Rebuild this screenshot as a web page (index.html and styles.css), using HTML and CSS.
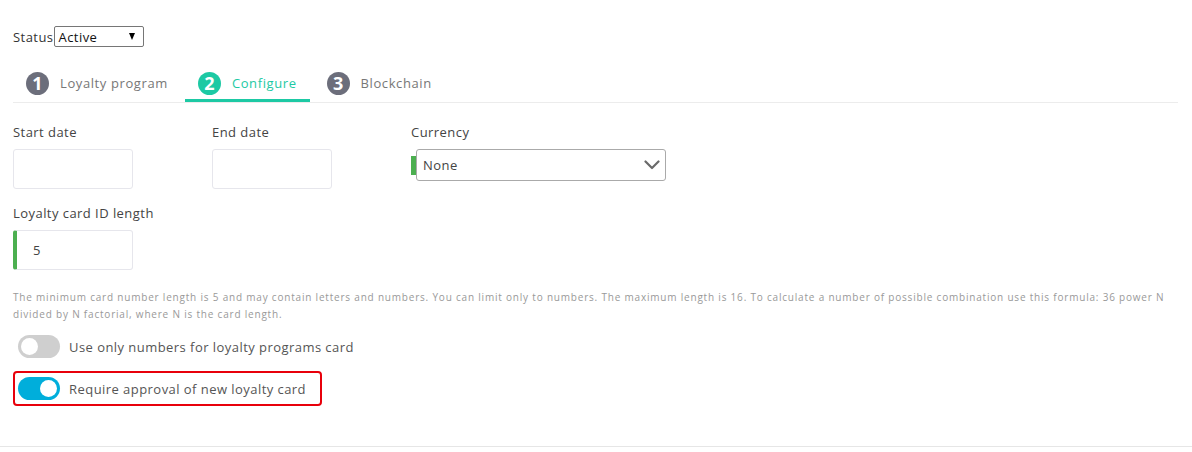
FILE: index.html
```html
<!DOCTYPE html>
<html lang="en">
<head>
<meta charset="utf-8">
<title>Loyalty program configuration</title>
<link rel="stylesheet" href="styles.css">
</head>
<body>
<div class="page">
  <div class="status-row">
    <span class="status-label">Status</span>
    <div class="native-select">
      <span>Active</span>
      <span class="native-arrow"></span>
    </div>
  </div>

  <ul class="tabs">
    <li class="tab"><span class="tab-num">1</span><span class="tab-text">Loyalty program</span></li>
    <li class="tab active"><span class="tab-num">2</span><span class="tab-text">Configure</span></li>
    <li class="tab"><span class="tab-num">3</span><span class="tab-text">Blockchain</span></li>
  </ul>

  <div class="form-row">
    <div class="field">
      <label class="field-label">Start date</label>
      <div class="text-input"></div>
    </div>
    <div class="field">
      <label class="field-label">End date</label>
      <div class="text-input"></div>
    </div>
    <div class="field">
      <label class="field-label">Currency</label>
      <div class="select-wrap">
        <span class="valid-mark"></span>
        <div class="select-box">
          <span>None</span>
          <svg class="chevron" width="16" height="10" viewBox="0 0 16 10"><path d="M1.5 1.5 L8 8 L14.5 1.5" fill="none" stroke="#6a6a6a" stroke-width="2.2" stroke-linecap="round" stroke-linejoin="round"/></svg>
        </div>
      </div>
    </div>
  </div>

  <div class="field single">
    <label class="field-label">Loyalty card ID length</label>
    <div class="text-input valid"><span>5</span></div>
  </div>

  <p class="help">The minimum card number length is 5 and may contain letters and numbers. You can limit only to numbers. The maximum length is 16. To calculate a number of possible combination use this formula: 36 power N divided by N factorial, where N is the card length.</p>

  <div class="switch-row">
    <span class="switch"><span class="knob"></span></span>
    <span class="switch-text">Use only numbers for loyalty programs card</span>
  </div>
  <div class="switch-row highlighted">
    <span class="switch on"><span class="knob"></span></span>
    <span class="switch-text">Require approval of new loyalty card</span>
  </div>
</div>
<div class="footer-line"></div>
</body>
</html>
```

FILE: styles.css
```css
html, body {
  margin: 0;
  padding: 0;
  background: #fff;
}
body {
  font-family: "Open Sans", "Liberation Sans", sans-serif;
  font-size: 13px;
  letter-spacing: 0.45px;
  color: #4a4a4a;
}
.page {
  padding: 26px 14px 0 13px;
}
.status-row {
  display: flex;
  align-items: center;
  height: 21px;
}
.status-label {
  color: #333;
  font-size: 13px;
}
.native-select {
  box-sizing: border-box;
  width: 90px;
  height: 21px;
  border: 1px solid #767676;
  border-radius: 2px;
  display: flex;
  align-items: center;
  justify-content: space-between;
  padding: 0 8px 0 4px;
  color: #111;
  font-size: 13px;
}
.native-arrow {
  width: 0;
  height: 0;
  border-left: 3.5px solid transparent;
  border-right: 3.5px solid transparent;
  border-top: 7px solid #000;
}
.tabs {
  list-style: none;
  margin: 17px 0 0 0;
  padding: 0;
  display: flex;
  gap: 4px;
  border-bottom: 1px solid #ececec;
}
.tab {
  display: flex;
  align-items: center;
  gap: 11px;
  padding: 8px 13px 4px 13px;
  border-bottom: 3px solid transparent;
  color: #777;
  line-height: 23px;
  letter-spacing: 0.6px;
}
.tab.active {
  border-bottom-color: #1dc9a4;
  color: #1dc9a4;
}
.tab-num {
  width: 23px;
  height: 23px;
  border-radius: 50%;
  background: #6c6e7b;
  color: #fff;
  font-weight: 700;
  font-size: 18px;
  letter-spacing: 0;
  line-height: 23px;
  text-align: center;
}
.tab.active .tab-num {
  background: #1dc9a4;
}
.form-row {
  display: flex;
  margin-top: 19px;
}
.field {
  width: 199px;
  display: flex;
  flex-direction: column;
}
.field-label {
  line-height: 20px;
  color: #444;
  margin-bottom: 7px;
}
.text-input {
  box-sizing: border-box;
  width: 120px;
  height: 40px;
  border: 1px solid #e6e6ec;
  border-radius: 3px;
  display: flex;
  align-items: center;
}
.text-input.valid {
  border-left: 4px solid #4caf50;
  padding-left: 16px;
  color: #444;
}
.single {
  margin-top: 14px;
}
.select-wrap {
  display: flex;
  align-items: center;
  width: 260px;
}
.valid-mark {
  width: 5px;
  height: 19px;
  background: #4caf50;
}
.select-box {
  box-sizing: border-box;
  width: 250px;
  height: 32px;
  border: 1px solid #aaa;
  border-radius: 3px;
  display: flex;
  align-items: center;
  justify-content: space-between;
  padding: 0 5px 0 6px;
  color: #444;
}
.help {
  margin: 19px 0 0 0;
  font-size: 10px;
  letter-spacing: 0.8px;
  line-height: 17px;
  color: #999;
}
.switch-row {
  display: flex;
  align-items: center;
  gap: 9px;
  box-sizing: border-box;
  width: fit-content;
  padding: 4px 14px 4px 3px;
  border: 2px solid transparent;
  border-radius: 4px;
  margin-top: 6px;
  color: #555;
}
.switch-row + .switch-row {
  margin-top: 7px;
}
.switch-row.highlighted {
  border-color: #e8000b;
}
.switch {
  position: relative;
  width: 42px;
  height: 23px;
  border-radius: 12px;
  background: #cfcfcf;
  flex: none;
}
.switch .knob {
  position: absolute;
  top: 3px;
  left: 3px;
  width: 17px;
  height: 17px;
  border-radius: 50%;
  background: #fff;
}
.switch.on {
  background: #00aedb;
}
.switch.on .knob {
  left: 22px;
}
.footer-line {
  margin-top: 40px;
  height: 1px;
  background: #e6e6e6;
}
```
